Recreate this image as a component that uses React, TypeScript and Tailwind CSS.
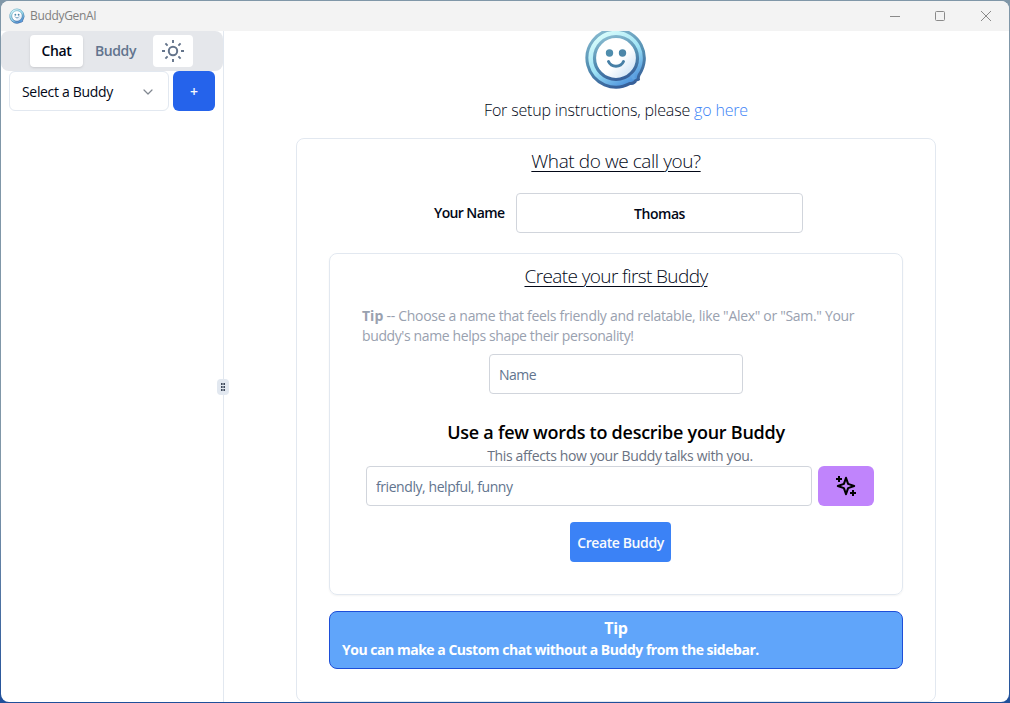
import { useId } from "react";
import { ChevronDown } from "lucide-react";

function BuddyLogo({ className }: { className: string }) {
  const id = useId();
  const outline = `${id}-outline`;
  const ring = `${id}-ring`;
  const face = `${id}-face`;
  return (
    <svg viewBox="0 0 64 64" className={className} aria-hidden="true">
      <defs>
        <linearGradient id={outline} x1="0.3" y1="0" x2="0.6" y2="1">
          <stop offset="0" stopColor="#86b9cf" />
          <stop offset="0.5" stopColor="#5590b3" />
          <stop offset="1" stopColor="#365f99" />
        </linearGradient>
        <linearGradient id={ring} x1="0.25" y1="0.1" x2="0.75" y2="0.95">
          <stop offset="0" stopColor="#d5fbfb" />
          <stop offset="0.5" stopColor="#9fe3f5" />
          <stop offset="1" stopColor="#4a90dc" />
        </linearGradient>
        <linearGradient id={face} x1="0.2" y1="0.2" x2="0.9" y2="0.9">
          <stop offset="0.5" stopColor="#ffffff" />
          <stop offset="1" stopColor="#c9e0f5" />
        </linearGradient>
      </defs>
      <path
        d="M32 3.300A28.900 28.900 0 1 0 46 57.400q4.500 .5 6-3.400l2.500-.6q-.6-1.800 .6-4.600A28.900 28.900 0 0 0 32 3.300z"
        fill={`url(#${ring})`}
        stroke={`url(#${outline})`}
        strokeWidth="3"
        strokeLinejoin="round"
      />
      <circle cx="32" cy="32" r="21.500" fill={`url(#${face})`} stroke={`url(#${outline})`} strokeWidth="3.200" />
      <path d="M46.500 49.500l4.500-3.500-.5 5.500 2 1.500-4 .5z" fill="#62a5e2" />
      <circle cx="25.500" cy="27" r="3.700" fill="#4f8dad" />
      <circle cx="38.500" cy="27" r="3.700" fill="#4a86a9" />
      <path d="M24.500 35.500c2.800 6.200 12.200 6.200 15 0" fill="none" stroke="#467fa6" strokeWidth="3" strokeLinecap="round" />
    </svg>
  );
}

function SunIcon() {
  return (
    <svg viewBox="0 0 24 24" className="size-6" fill="none" stroke="#64748b" strokeWidth="2" aria-hidden="true">
      <circle cx="12" cy="12" r="4.200" />
      <path
        d="M12 1v3M12 20v3M1 12h3M20 12h3M4.400 4.400l2.200 2.200M17.400 17.400l2.200 2.200M4.400 19.600l2.200-2.200M17.400 6.600l2.200-2.200"
        strokeWidth="1.900"
      />
    </svg>
  );
}

function SparklesIcon() {
  return (
    <svg viewBox="0 0 24 24" className="size-6" fill="none" stroke="#000000" strokeWidth="2" aria-hidden="true">
      <path d="M12 3.800l2.100 6.100 6.100 2.100-6.100 2.100L12 20.200l-2.100-6.100L3.800 12l6.100-2.100z" strokeLinejoin="round" />
      <path d="M5 2v6M2 5h6M19 16v6M16 19h6" />
    </svg>
  );
}

function TitleBar() {
  return (
    <header className="flex h-[30px] shrink-0 items-center bg-[#f3f3f3] pl-2 pr-[17px]">
      <BuddyLogo className="size-4" />
      <span className="ml-[5px] flex-1 text-xs tracking-[-0.33px] text-[#808080]">BuddyGenAI</span>
      <svg viewBox="0 0 102 12" className="h-3 w-[102px]" fill="none" stroke="#8a8a8a" aria-hidden="true">
        <path d="M0 6.500h10" />
        <rect x="45.500" y="1.500" width="9" height="9" rx="1" />
        <path d="M91 1l10 10M101 1L91 11" />
      </svg>
    </header>
  );
}

function Sidebar() {
  return (
    <aside className="w-[222px] shrink-0">
      <nav className="flex h-10 items-center rounded-lg bg-[#e5e7eb] pl-[29px] text-sm font-[550] text-slate-500">
        <button className="h-8 w-[53px] rounded-[4px] bg-white text-center tracking-[-0.35px] text-[#020817] shadow-sm">Chat</button>
        <button className="h-8 w-[65px] text-center tracking-[-0.4px]">Buddy</button>
        <button className="ml-[5px] flex h-8 w-10 items-center justify-center rounded-[4px] bg-white">
          <SunIcon />
        </button>
      </nav>
      <div className="flex gap-1 pl-2">
        <button className="flex h-10 w-40 items-center justify-between rounded-md border border-slate-200 pt-px pl-3 pr-3 text-sm tracking-[-0.33px] text-[#020817]">
          <span>Select a Buddy</span>
          <ChevronDown className="size-4 text-[#808790]" strokeWidth={1.8} />
        </button>
        <button className="h-10 w-[42px] rounded-md bg-[#2563eb] pt-px text-sm font-semibold text-slate-50">+</button>
      </div>
    </aside>
  );
}

function ResizeHandle() {
  return (
    <div className="relative w-px shrink-0 bg-slate-200">
      <div className="absolute top-[348px] left-[-6px] flex h-4 w-3 items-center justify-center rounded-[4px] bg-slate-200">
        <svg viewBox="0 0 6 8" className="h-2 w-1.5" fill="#3f4a5c" aria-hidden="true">
          <path d="M1 0h1.600v2H1zM3.400 0H5v2H3.400zM1 3h1.600v2H1zM3.400 3H5v2H3.400zM1 6h1.600v2H1zM3.400 6H5v2H3.400z" />
        </svg>
      </div>
    </div>
  );
}

function BuddyForm() {
  return (
    <section className="flex h-[342px] flex-col items-center rounded-lg border border-slate-200 shadow-[0_1px_2px_0_rgb(0_0_0/0.05)]">
      <h2 className="mt-2 text-[19px] leading-7 font-[350] tracking-[-0.6px] underline decoration-1 underline-offset-[3px]">
        Create your first Buddy
      </h2>
      <p className="mt-4 w-full pl-8 text-sm leading-5 whitespace-nowrap text-gray-400">
        <b className="font-bold">Tip</b>
        <span className="tracking-[-0.308px]"> -- Choose a name that feels friendly and relatable, like "Alex" or "Sam." Your</span>
        <br />
        <span className="tracking-[-0.385px]">buddy's name helps shape their personality!</span>
      </p>
      <input
        placeholder="Name"
        className="mt-2 h-10 w-[254px] rounded-[4px] border border-gray-300 px-[9px] pt-px text-sm tracking-[-0.5px] placeholder:text-slate-500"
      />
      <h3 className="mt-6 text-lg leading-7 font-[650] tracking-[-0.26px] text-black">Use a few words to describe your Buddy</h3>
      <p className="pl-2 text-sm leading-5 tracking-[-0.35px] text-gray-500">This affects how your Buddy talks with you.</p>
      <div className="flex gap-1.5 pl-2">
        <input
          placeholder="friendly, helpful, funny"
          className="h-10 w-[446px] rounded-[4px] border border-gray-300 px-[9px] pt-px text-sm tracking-[-0.43px] placeholder:text-slate-500"
        />
        <button className="flex h-10 w-14 items-center justify-center rounded-md bg-[#c084fc]">
          <SparklesIcon />
        </button>
      </div>
      <button className="mt-4 ml-[9px] h-10 w-[101px] rounded-[4px] bg-[#3b82f6] pt-px text-sm font-semibold tracking-[-0.4px] text-slate-50">
        Create Buddy
      </button>
    </section>
  );
}

function SetupCard() {
  return (
    <div className="mt-4 flex h-[564px] w-[640px] flex-col rounded-lg border border-slate-200 px-8">
      <h1 className="mt-2 text-center text-[19px] leading-7 font-[350] tracking-[-0.42px] underline decoration-1 underline-offset-[3px]">
        What do we call you?
      </h1>
      <label className="mt-[18px] flex items-center gap-3 pl-[105px] text-sm font-[550]">
        <span className="w-[70px] tracking-[-0.62px] whitespace-nowrap">Your Name</span>
        <input
          defaultValue="Thomas"
          className="h-10 w-[287px] rounded-[4px] border border-gray-300 pt-px text-center tracking-[-0.45px]"
        />
      </label>
      <div className="mt-5">
        <BuddyForm />
      </div>
      <div className="mt-4 h-[58px] rounded-lg border border-[#1d4ed8] bg-[#60a5fa] px-3 pt-1 font-bold text-white">
        <div className="text-center text-base leading-6 tracking-[-0.3px]">Tip</div>
        <p className="text-sm leading-5 tracking-[-0.48px]">You can make a Custom chat without a Buddy from the sidebar.</p>
      </div>
    </div>
  );
}

export default function App() {
  return (
    <div className="h-[703px] w-[1010px] overflow-hidden bg-linear-to-b from-[#8097a8] from-70% to-[#1f4f9a] p-px font-['Open_Sans','Noto_Sans',sans-serif]">
      <div className="flex h-[701px] flex-col overflow-hidden rounded-lg bg-white text-[#020817]">
        <TitleBar />
        <div className="flex min-h-0 flex-1">
          <Sidebar />
          <ResizeHandle />
          <main className="flex min-w-0 flex-1 flex-col items-center overflow-hidden pr-px">
            <BuddyLogo className="-mt-[5px] size-16 shrink-0" />
            <p className="mt-2 text-base leading-6 font-[350] tracking-[-0.17px]">
              For setup instructions, please <a className="text-[#3b82f6]">go here</a>
            </p>
            <SetupCard />
          </main>
        </div>
      </div>
    </div>
  );
}
